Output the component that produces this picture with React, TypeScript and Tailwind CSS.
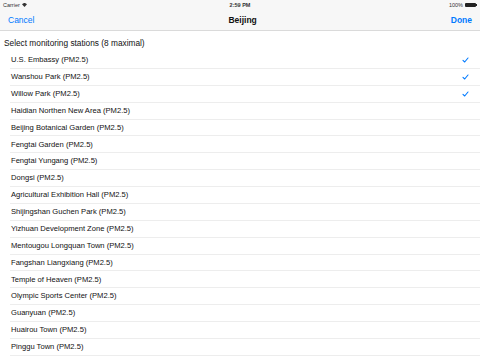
import React from "react";

const stations = [
  ["U.S. Embassy (PM2.5)", true],
  ["Wanshou Park (PM2.5)", true],
  ["Willow Park (PM2.5)", true],
  ["Haidian Northen New Area (PM2.5)", false],
  ["Beijing Botanical Garden (PM2.5)", false],
  ["Fengtai Garden (PM2.5)", false],
  ["Fengtai Yungang (PM2.5)", false],
  ["Dongsi (PM2.5)", false],
  ["Agricultural Exhibition Hall (PM2.5)", false],
  ["Shijingshan Guchen Park (PM2.5)", false],
  ["Yizhuan Development Zone (PM2.5)", false],
  ["Mentougou Longquan Town (PM2.5)", false],
  ["Fangshan Liangxiang (PM2.5)", false],
  ["Temple of Heaven (PM2.5)", false],
  ["Olympic Sports Center (PM2.5)", false],
  ["Guanyuan (PM2.5)", false],
  ["Huairou Town (PM2.5)", false],
  ["Pinggu Town (PM2.5)", false],
] as const;

function Check() {
  return (
    <svg width="7" height="6" viewBox="0 0 7 6">
      <path d="M1 3.4 L2.7 5 L6 1" fill="none" stroke="#007aff" strokeWidth="1.1" strokeLinecap="round" strokeLinejoin="round" />
    </svg>
  );
}

export default function App() {
  return (
    <div className="w-[480px] h-[360px] overflow-hidden bg-white relative" style={{ fontFamily: '"Liberation Sans", Arial, sans-serif' }}>
      <div className="bg-[#f7f7f7] border-b border-[#dadada]">
        <div className="h-[10px] flex items-center justify-between px-[3px] text-[5.5px] text-[#333]">
          <div className="flex items-center gap-[2px] w-[60px]">
            <span>Carrier</span>
            <svg width="5" height="4" viewBox="0 0 10 8">
              <path d="M5 8 L0 2.5 A7 7 0 0 1 10 2.5 Z" fill="#333" />
            </svg>
          </div>
          <span className="font-bold">2:59 PM</span>
          <div className="flex items-center justify-end gap-[2px] w-[60px]">
            <span>100%</span>
            <div className="w-[11px] h-[4.5px] bg-[#222] rounded-[1px]" />
            <div className="w-[1px] h-[2px] bg-[#222] -ml-[2px]" />
          </div>
        </div>
        <div className="h-[20px] flex items-center justify-between px-[8px] text-[8.5px]">
          <span className="text-[#007aff]">Cancel</span>
          <span className="font-semibold text-[#111]">Beijing</span>
          <span className="text-[#007aff] font-bold">Done</span>
        </div>
      </div>
      <div className="h-[21px] flex items-end pb-[2.5px] pl-[4px] text-[8.3px] text-[#111]">
        Select monitoring stations (8 maximal)
      </div>
      <div>
        {stations.map(([name, checked]) => (
          <div key={name} className="h-[16.875px] pl-[10px] flex">
            <div className="flex-1 flex items-center justify-between pl-[1px] pr-[11px] border-b border-[#ededed] text-[7.6px] text-[#111]">
              <span>{name}</span>
              {checked ? <Check /> : null}
            </div>
          </div>
        ))}
      </div>
    </div>
  );
}
